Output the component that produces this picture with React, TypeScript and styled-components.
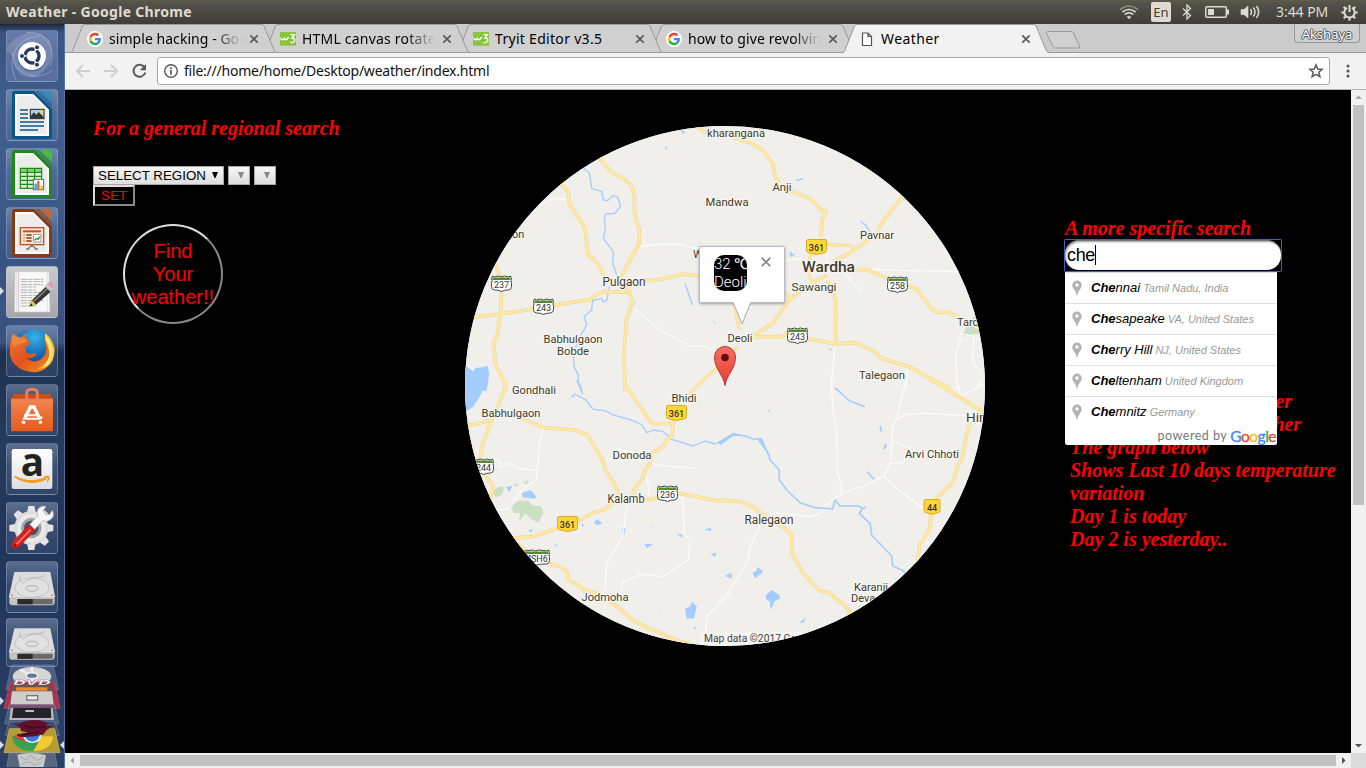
import React from "react";
import styled, { createGlobalStyle } from "styled-components";

const Global = createGlobalStyle`
  * { box-sizing: border-box; }
  html, body { margin: 0; padding: 0; overflow: hidden; }
`;

const UI = `"Noto Sans", "Open Sans", sans-serif`;

const Screen = styled.div`
  width: 1366px; height: 768px; display: flex; flex-direction: column;
  background: #000; overflow: hidden; font-family: ${UI};
`;

/* ---------- system panel ---------- */
const Panel = styled.header`
  height: 24px; flex: none; display: flex; align-items: center; justify-content: space-between;
  padding: 0 8px 0 6px; color: #dfdbd2;
  background: linear-gradient(#5d5a4e 0, #55524a 3px, #3e3d39 100%);
`;
const PanelTitle = styled.div`font: bold 14px/24px ${UI}; letter-spacing: 0.3px; white-space: nowrap;`;
const Indicators = styled.div`display: flex; align-items: center; height: 24px;`;
const Gap = styled.span<{ $w: number }>`width: ${p => p.$w}px; flex: none;`;
const Spring = styled.span`flex: 1;`;
const Lang = styled.span`
  width: 20px; height: 20px; border-radius: 2px; background: #dfdbd2; color: #3d3c38;
  font: 13px/21px ${UI}; text-align: center;
`;
const Clock = styled.span`font: 14px/24px ${UI}; width: 52px; white-space: nowrap; letter-spacing: -0.05px;`;

const Body = styled.div`flex: 1; display: flex; min-height: 0;`;

/* ---------- launcher ---------- */
const Launcher = styled.nav`
  width: 65px; flex: none; height: 744px; display: flex; flex-direction: column; align-items: center;
  gap: 7px; padding: 6px 1px 0 0; border-right: 1px solid #55759f; overflow: hidden; position: relative;
  background: linear-gradient(#1d2840 0, #3a527f 8px, #41608f 90px, #3a5584 230px, #3a5280 318px, #1d3150 328px, #263a5c 420px, #22355a 560px, #2c4166 744px);
`;
const Tile = styled.div<{ $lit?: boolean; $h?: number }>`
  width: 52px; height: ${p => p.$h ?? 52}px; flex: none; border-radius: 4px;
  margin-top: ${p => (p.$h ? -2 : 0)}px;
  border: 1px solid rgba(190, 205, 230, 0.3);
  background: ${p => p.$lit
    ? "linear-gradient(#c9cacc, #a4a4aa)"
    : "linear-gradient(rgba(200,215,240,.34), rgba(150,170,205,.2) 45%, rgba(110,135,180,.18))"};
  svg { display: block; margin: -1px; width: 52px; height: ${p => p.$h ?? 52}px; }
`;
const Stack = styled.svg`width: 64px; height: 104px; flex: none; display: block; margin-top: -11px;`;
const RunMark = styled.i<{ $top: number; $right?: boolean }>`
  position: absolute; top: ${p => p.$top}px; ${p => (p.$right ? "right: 0" : "left: 0")};
  border: 4px solid transparent;
  ${p => (p.$right ? "border-left: 0; border-right-color: #d8dce4" : "border-right: 0; border-left-color: #d8dce4")};
`;

const Icon = ({ children }: { children: React.ReactNode }) => (
  <svg viewBox="0 0 156 156" preserveAspectRatio="none">{children}</svg>
);

const UbuntuIcon = () => (
  <Icon>
    <rect x="3" y="3" width="150" height="150" rx="10" fill="#6478ac" opacity=".6" />
    <path d="M0 60C20 10 90-10 130 30C150 70 130 120 90 140C50 150 20 120 22 80" fill="#fff" opacity=".16" />
    <path d="M30 150C0 90 30 20 100 20M60 8C120 0 155 60 130 110M20 70C20 130 90 160 140 120" fill="none" stroke="#fff" strokeWidth="3" opacity=".25" />
    <circle cx="78" cy="81" r="43" fill="#304473" opacity=".5" />
    <circle cx="78" cy="78" r="42" fill="#fff" />
    <circle cx="78" cy="78" r="21" fill="none" stroke="#2c3a5c" strokeWidth="10" strokeDasharray="39 5" strokeDashoffset="-2.5" transform="rotate(180 78 78)" />
    {[180, 300, 60].map(a => (
      <circle key={a} cx={78 + 30 * Math.cos((a * Math.PI) / 180)} cy={78 + 30 * Math.sin((a * Math.PI) / 180)} r="7.5" fill="#2c3a5c" stroke="#fff" strokeWidth="3" />
    ))}
  </Icon>
);

const OfficeDoc = ({ c, l, children }: { c: string; l: string; children: React.ReactNode }) => (
  <Icon>
    <path d="M26 6H84L138 60V142Q138 150 130 150H26Q18 150 18 142V14Q18 6 26 6Z" fill={c} />
    <path d="M84 6H130Q138 6 138 14V60Z" fill={c} opacity=".45" />
    <path d="M101 6H130Q138 6 138 14V43Z" fill={l} opacity=".85" />
    <path d="M27 15H82L129 62V141H27Z" fill="#fbfbfb" />
    <path d="M33 21H80L123 64V135H33Z" fill="#ececec" />
    {children}
  </Icon>
);

const WriterIcon = () => (
  <OfficeDoc c="#0b5688" l="#3a8fbd">
    <path d="M42 63H66M42 75H66M42 87H66M42 99H114M42 111H114M42 123H96" stroke="#0b5688" strokeWidth="5" />
    <rect x="73" y="61" width="41" height="28" fill="#9fd2ee" stroke="#222" strokeWidth="3" />
    <circle cx="106" cy="68" r="6" fill="#f5d74a" />
    <path d="M75 87V80L84 70L91 78L98 69L112 83V87Z" fill="#333" />
  </OfficeDoc>
);
const CalcIcon = () => (
  <OfficeDoc c="#1d8a10" l="#4cc43a">
    <rect x="43" y="61" width="64" height="60" fill="#d9f5d0" />
    <rect x="43" y="61" width="64" height="12" fill="#8ad57a" />
    <path d="M43 61H107V121H43ZM43 73H107M43 85H107M43 97H107M43 109H107M64 61V121M86 61V121" fill="none" stroke="#1d8a10" strokeWidth="3.5" />
    <rect x="82" y="94" width="31" height="31" fill="#fff" stroke="#666" strokeWidth="3" />
    <path d="M89 124V107" stroke="#3b9fe0" strokeWidth="7" /><path d="M97 124V99" stroke="#e8681a" strokeWidth="7" /><path d="M107 124V113" stroke="#f0c000" strokeWidth="7" />
  </OfficeDoc>
);
const ImpressIcon = () => (
  <OfficeDoc c="#8a3a10" l="#cf6a35">
    <rect x="43" y="62" width="70" height="51" fill="#fbe6da" stroke="#c4501c" strokeWidth="4" />
    <path d="M51 73H105" stroke="#c4501c" strokeWidth="6" />
    <path d="M51 84H58M51 93H58M51 102H58" stroke="#e39a72" strokeWidth="5" />
    <path d="M61 84H77M61 93H77M61 102H77" stroke="#8a3a10" strokeWidth="5" />
    <rect x="83" y="83" width="22" height="22" fill="#fff" stroke="#777" strokeWidth="2" />
    <path d="M86 100L92 94L96 97L103 88" stroke="#1f9a2f" strokeWidth="4" fill="none" />
    <path d="M66 125L78 115L90 125M60 126H70M86 126H96" stroke="#777" strokeWidth="4" fill="none" />
  </OfficeDoc>
);
const EditorIcon = () => (
  <Icon>
    <path d="M27 17H129L132 138H25Z" fill="#f8f8f6" stroke="#c9c9c9" strokeWidth="2" />
    <path d="M37 18V137" stroke="#e59a9a" strokeWidth="2" /><path d="M124 18V137M31 18V137" stroke="#b9cdea" strokeWidth="1.5" />
    <g stroke="#999" strokeWidth="2.2" strokeDasharray="20 2 13 3">
      {[40, 47, 56, 63, 72, 79, 88, 95, 104, 111, 120].map(y => <path key={y} d={`M44 ${y}H${y % 3 ? 112 : 90}`} />)}
    </g>
    <path d="M78 103L124 58L139 73L90 116L70 121Z" fill="#363636" />
    <path d="M84 106L128 64" stroke="#888" strokeWidth="4" />
    <path d="M78 103L90 116L70 121Z" fill="#e6cf52" /><path d="M76 112L70 121L80 119Z" fill="#222" />
    <path d="M116 61L126 51L144 67L134 78Z" fill="#c8c8c8" />
    <path d="M124 53L130 48Q139 48 143 59L139 67Z" fill="#e993b8" />
  </Icon>
);
const FirefoxIcon = () => (
  <Icon>
    <defs>
      <radialGradient id="ffb" cx=".55" cy=".2" r=".8"><stop offset="0" stopColor="#35b4ea" /><stop offset=".6" stopColor="#1464ab" /><stop offset="1" stopColor="#0c3470" /></radialGradient>
      <linearGradient id="ffo" x2="1" y2="1"><stop offset="0" stopColor="#ec7930" /><stop offset=".5" stopColor="#e2521f" /><stop offset="1" stopColor="#f59a20" /></linearGradient>
    </defs>
    <circle cx="80" cy="73" r="61" fill="url(#ffb)" />
    <path d="M20 26C28 38 35 38 46 37L62 25C59 35 61 43 66 47L75 53C74 59 58 62 57 67C60 72 61 77 60 81C68 92 84 82 91 86C88 96 76 102 61 99C74 110 91 113 104 103C119 92 123 75 118 53C112 44 115 37 120 28C127 40 135 42 139 57C145 70 151 61 140 106C120 139 94 145 72 140C38 136 8 111 12 75C10 53 15 43 20 26Z" fill="url(#ffo)" />
    <path d="M118 25C140 43 155 76 138 108C128 127 113 130 94 132C124 118 137 96 125 65C118 45 115 40 118 25Z" fill="#f9cf3c" />
    <path d="M121 39C140 66 138 101 118 121" fill="none" stroke="#fff3a6" strokeWidth="5" />
    <path d="M20 26C13 48 20 56 23 66L41 56L57 54L64 48L55 40L45 38Z" fill="#f3a35b" opacity=".45" />
  </Icon>
);
const SoftwareIcon = () => (
  <Icon>
    <defs><linearGradient id="bag" x2="0" y2="1"><stop offset="0" stopColor="#f0854e" /><stop offset="1" stopColor="#e8591f" /></linearGradient></defs>
    <path d="M22 30H134L141 48H15Z" fill="#c94e1c" />
    <path d="M15 44H141V142H15Z" fill="url(#bag)" />
    <path d="M62 52V26Q62 16 78 16Q94 16 94 26V52" fill="none" stroke="#e88054" strokeWidth="9" />
    <path d="M57 102L73 69H84L100 102M54 111L51 119M102 111L105 119" fill="none" stroke="#fff" strokeWidth="10" />
    <path d="M50 104H101Q107 104 106 97M54 94H96" stroke="#fff" strokeWidth="6" fill="none" />
  </Icon>
);
const AmazonIcon = () => (
  <Icon>
    <defs><linearGradient id="az" x2="0" y2="1"><stop offset="0" stopColor="#fff" /><stop offset="1" stopColor="#dedee2" /></linearGradient></defs>
    <rect x="17" y="18" width="122" height="120" rx="7" fill="url(#az)" />
    <text x="79" y="100" textAnchor="middle" fontFamily="Open Sans, sans-serif" fontWeight="bold" fontSize="116" fill="#222">a</text>
    <path d="M25 103Q72 134 122 109L119 103Q72 122 27 98Z" fill="#f79a1c" />
    <path d="M109 103Q124 94 131 101Q132 110 122 120L125 105Z" fill="#f79a1c" />
  </Icon>
);
const SettingsIcon = () => (
  <Icon>
    <g transform="translate(76 78)">
      {[0, 45, 90, 135, 180, 225, 270, 315].map(a => <path key={a} d="M-13-46L-9-66H9L13-46Z" fill="#e5e5e5" transform={`rotate(${a})`} />)}
      <circle r="51" fill="#dcdcdc" /><circle r="43" fill="#eaeaea" /><circle r="31" fill="#a5a5a5" /><circle r="22" fill="#45536d" />
    </g>
    <path d="M22 118L70 69L87 84L38 136Q28 144 18 134Q13 128 22 118Z" fill="#d2231b" stroke="#a81713" strokeWidth="2" />
    <path d="M31 127L74 83" stroke="#f57268" strokeWidth="5" />
    <circle cx="27" cy="130" r="4" fill="#801010" />
    <path d="M71 67L96 42Q88 21 105 14Q113 10 120 14L112 26L119 38L130 38L139 25Q148 42 135 52Q124 62 110 56L86 82Z" fill="#f6f6f6" stroke="#aaa" strokeWidth="2" />
  </Icon>
);
const DriveIcon = () => (
  <Icon>
    <path d="M26 34H132L146 108H10Z" fill="#dcdcdc" stroke="#eee" strokeWidth="2" />
    <path d="M10 108H146V124Q146 133 136 133H20Q10 133 10 124Z" fill="#c5c5c3" />
    <path d="M38 114H140V130H40Z" fill="#6a6a68" /><path d="M34 114H80V130H34Z" fill="#2c2c2c" />
    <ellipse cx="78" cy="80" rx="51" ry="29" fill="#e1e1e1" stroke="#b5b5b5" strokeWidth="2" />
    <path d="M45 43Q35 60 52 66Q70 48 110 48L113 39" fill="none" stroke="#aaa" strokeWidth="2" />
    <ellipse cx="78" cy="82" rx="18" ry="9" fill="#ddd" stroke="#999" strokeWidth="2" />
    <circle cx="18" cy="103" r="2.5" fill="#777" /><circle cx="138" cy="103" r="2.5" fill="#777" />
  </Icon>
);

/* folded tiles at the launcher's foot: disc, files, terminal, a red splash, chrome, trash */
const FoldedIcons = () => (
  <Stack viewBox="0 489 192 312">
    <path d="M34 495H160L176 570H18Z" fill="#7d92ba" opacity=".4" stroke="#c5d2e8" strokeWidth="2" />
    <path d="M38 530A58 29 0 0 1 154 530L148 545H44Z" fill="#d5d5d3" />
    <path d="M62 510L130 548M96 500V548" stroke="#fff" strokeWidth="7" opacity=".6" />
    <ellipse cx="96" cy="527" rx="17" ry="9" fill="#607994" stroke="#eee" strokeWidth="5" />
    <path d="M30 548H164L180 625H12Z" fill="#a7344c" stroke="#c55068" strokeWidth="2" />
    <path d="M40 557H150L157 574H35Z" fill="#5c5b57" />
    <path d="M48 562H142V572H48Z" fill="#ea8b2d" />
    <path d="M36 574H156L161 613H31Z" fill="#cecdc9" />
    <rect x="80" y="587" width="33" height="13" fill="#eee" stroke="#777" strokeWidth="4" />
    <text x="40" y="556" fontFamily="DejaVu Sans" fontWeight="bold" fontStyle="italic" fontSize="22" textLength="112" lengthAdjust="spacingAndGlyphs" fill="#fff" stroke="#555" strokeWidth=".8">DVD</text>
    <path d="M28 614H164L176 672H14Z" fill="#5a6a8a" opacity=".65" stroke="#93a3bf" strokeWidth="2" />
    <path d="M32 624H158L162 660H28Z" fill="#b7b8bb" /><path d="M40 624H152L154 654H36Z" fill="#242329" />
    <path d="M76 633H102" stroke="#ddd" strokeWidth="5" />
    <path d="M28 664H164L178 706H16Z" fill="#414e74" stroke="#7787a8" strokeWidth="2" />
    <path d="M28 686H164L180 758H12Z" fill="#b59c34" stroke="#d2bb58" strokeWidth="2" />
    <path d="M36 709Q40 752 96 754Q150 750 158 709Z" fill="#36a350" />
    <path d="M96 709H160Q154 752 100 754L116 725Z" fill="#f7ca34" />
    <path d="M38 709L62 702L80 728Z" fill="#db4437" />
    <path d="M68 705Q70 727 97 729Q123 727 124 705Z" fill="#eee" /><path d="M74 705Q78 724 97 725Q116 723 119 705Z" fill="#3f7be5" />
    <path d="M38 668Q60 675 68 665Q105 655 128 664L150 668L133 676L159 679Q138 688 131 703Q100 713 60 710Q37 700 70 701L84 696Q56 696 62 684Q48 676 38 668Z" fill="#64102c" />
    <path d="M70 675Q98 690 138 678M66 703Q102 700 118 696" fill="none" stroke="#331227" strokeWidth="5" />
    <path d="M28 758H164L172 804H20Z" fill="#6e7788" stroke="#a6afbf" strokeWidth="2" opacity=".7" />
    <path d="M52 764Q94 753 138 766L130 804H60Z" fill="#c9cbc9" />
    <path d="M60 770L78 780L92 766L112 782L130 770M66 792L88 784L104 796L124 786" stroke="#a2a8aa" strokeWidth="3" fill="none" />
  </Stack>
);

/* ---------- browser window ---------- */
const Browser = styled.main`flex: 1; display: flex; flex-direction: column; min-width: 0;`;
const TabStrip = styled.div`
  height: 29px; flex: none; display: flex; position: relative; padding-left: 6px; background: #cbcbcb;
  border-bottom: 1px solid #999;
`;
const TabBox = styled.div<{ $z: number }>`
  position: relative; z-index: ${p => p.$z}; width: 206px; height: 29px; flex: none; margin-right: -13px;
  display: flex; align-items: center; padding: 0 18px 0 16px;
  > svg { flex: none; }
  > svg:first-child { position: absolute; left: 0; top: 0; }
`;
const TabText = styled.span<{ $fade?: boolean; $ls: number }>`
  position: relative; flex: 1; margin: 0 8px 0 6px; overflow: hidden; white-space: nowrap; color: #000;
  font: 14px/29px ${UI}; letter-spacing: ${p => p.$ls}px;
  ${p => p.$fade && "-webkit-mask-image: linear-gradient(90deg, #000 104px, transparent 133px);"}
`;
const Raised = styled.svg`position: relative;`;
const Profile = styled.div`
  margin-left: auto; margin-right: 6px; width: 66px; height: 19px; border: 1px solid #999; border-top: 0;
  border-radius: 0 0 4px 4px; background: #cfcfcf; color: #fff; text-align: center; font: 13px/20px ${UI};
  text-shadow: 1px 0 #555, -1px 0 #555, 0 1px #555, 0 -1px #555;
`;
const NewTab = styled.svg`margin: 6px 0 0 9px; flex: none;`;

const GoogleG = () => (
  <Raised width="16" height="16" viewBox="0 0 48 48">
    <circle cx="24" cy="24" r="24" fill="#fff" />
    <g transform="translate(5.5 5.5) scale(.77)">
      <path fill="#EA4335" d="M24 9.5c3.5 0 6.700 1.200 9.200 3.600l6.900-6.900C35.900 2.400 30.500 0 24 0 14.600 0 6.500 5.400 2.600 13.200l8 6.200C12.400 13.700 17.700 9.500 24 9.500z" />
      <path fill="#4285F4" d="M47 24.600c0-1.600-.2-3.100-.4-4.600H24v9h12.900c-.6 3-2.200 5.500-4.700 7.200l7.700 6C44.400 38 47 31.800 47 24.600z" />
      <path fill="#FBBC05" d="M10.500 28.600a14.500 14.500 0 0 1 0-9.200l-8-6.200a24 24 0 0 0 0 21.600z" />
      <path fill="#34A853" d="M24 48c6.500 0 11.900-2.100 15.900-5.800l-7.700-6c-2.200 1.500-4.900 2.300-8.200 2.300-6.300 0-11.600-4.200-13.500-9.900l-8 6.200C6.500 42.600 14.600 48 24 48z" />
    </g>
  </Raised>
);
const W3 = () => (
  <Raised width="16" height="16" viewBox="0 0 48 48">
    <path d="M0 3H48V44H0Z" fill="#8bc53f" />
    <path d="M2 20Q4 28 9 26Q13 24 13 20Q14 27 18 26Q23 25 24 20H27M31 11H43L36 21Q45 20 44 29Q41 37 31 34" fill="none" stroke="#fff" strokeWidth="4" />
  </Raised>
);
const PageIcon = () => (
  <Raised width="16" height="16" viewBox="0 0 16 16">
    <path d="M3.500 2H9L12.500 5.500V14.500H3.500ZM9 2V5.500H12.500" fill="#fff" stroke="#555" strokeWidth="1.200" />
  </Raised>
);
const CloseX = () => (
  <Raised width="10" height="10" viewBox="0 0 10 10"><path d="M1.300 1.300L8.700 8.700M8.700 1.300L1.300 8.700" stroke="#5a5a5a" strokeWidth="1.700" /></Raised>
);

const Tab = ({ title, icon, z, active, fade, ls = 0 }: { title: string; icon: React.ReactNode; z: number; active?: boolean; fade?: boolean; ls?: number }) => (
  <TabBox $z={z}>
    <svg width="206" height="29" viewBox="0 0 206 29">
      <path d="M0 29C1.500 28 1.500 27 2 26L11.500 2Q12.300.5 14 .5H190Q192 .5 193 2L203 26Q204 28.500 206 29Z" fill={active ? "#f2f2f2" : "#d0d0d0"} />
      <path d="M0 28.500C1.500 28 1.500 27 2 26L11.500 2Q12.300.5 14 .5H190Q192 .5 193 2L203 26Q204 28.500 206 28.500" fill="none" stroke="#999" />
      {!active && <path d="M0 28.500H206" stroke="#999" />}
    </svg>
    {icon}
    <TabText $fade={fade} $ls={ls}>{title}</TabText>
    <CloseX />
  </TabBox>
);

const Toolbar = styled.div`
  height: 37px; flex: none; display: flex; align-items: center; background: #f2f2f2; padding: 0 12px 0 10px;
  border-bottom: 1px solid #b6b6b6;
`;
const Omnibox = styled.div`
  height: 28px; width: 1173px; margin: 0 0 0 9px; border: 1px solid #a9a9a9; border-radius: 3px; background: #fff;
  display: flex; align-items: center; padding: 0 5px 0 5px; color: #111; font: 14px/26px ${UI};
`;
const Url = styled.span`flex: 1; margin-left: 5px; letter-spacing: -0.22px; white-space: nowrap;`;
const Menu = styled.svg`margin-left: 16px; flex: none;`;

const Viewport = styled.div`flex: 1; display: grid; grid-template: 663px 15px / 1286px 15px;`;
const Page = styled.section`
  background: #000; overflow: hidden; display: flex; align-items: flex-start; color: #f00;
  font: italic bold 20px/23px "Liberation Serif", serif;
`;
const ScrollTrack = styled.div<{ $across?: boolean }>`
  background: #f1f1f1; display: flex; align-items: center; flex-direction: ${p => (p.$across ? "row" : "column")};
`;
const VThumb = styled.i`width: 11px; height: 400px; background: #c1c1c1;`;
const HThumb = styled.i`width: 1256px; height: 11px; background: #c1c1c1;`;
const Corner = styled.div`background: #dcdcdc;`;
const ArrowSvg = styled.svg<{ $turn: number }>`flex: none; transform: rotate(${p => p.$turn}deg);`;
const Arrow = ({ turn, on }: { turn: number; on?: boolean }) => (
  <ArrowSvg $turn={turn} width="15" height="15" viewBox="0 0 15 15">
    <path d="M4 9L7.500 5.500L11 9Z" fill={on ? "#505050" : "#a3a3a3"} />
  </ArrowSvg>
);

/* ---------- page: left column ---------- */
const LeftColumn = styled.div`width: 372px; margin-left: 28px; padding-top: 27px;`;
const MapSlot = styled.div`width: 600px; padding-top: 36px;`;
const RightColumn = styled.div`width: 286px; padding-top: 127px; position: relative;`;
const Line = styled.div`height: 23px; white-space: nowrap;`;
const Selects = styled.div`display: flex; gap: 4px; margin-top: 26px;`;
const Select = styled.div<{ $off?: boolean }>`
  height: 19px; width: ${p => (p.$off ? 22 : 131)}px; border: 1px solid #a6a6a6; padding: 0 5px 0 4px;
  background: linear-gradient(#f6f6f6, #dedede); color: ${p => (p.$off ? "#888" : "#000")};
  display: flex; align-items: center; justify-content: ${p => (p.$off ? "flex-end" : "space-between")};
  font: normal 13.333px/17px "Liberation Sans", sans-serif; white-space: nowrap;
  svg { margin-bottom: 2px; }
`;
const Caret = () => <svg width="6" height="6" viewBox="0 0 6 6"><path d="M0 0H6L3.500 6H2.500Z" fill="currentColor" /></svg>;
const SetButton = styled.button`
  display: block; width: 42px; height: 21px; padding: 0; border: 2px solid; border-color: #ddd #888 #888 #ddd;
  background: #000; color: #f00; font: 13.333px/17px "Liberation Sans", sans-serif;
`;
const RoundButton = styled.button`
  display: block; margin: 18px 0 0 30px; width: 100px; height: 100px; padding: 0; border-radius: 50%;
  border: 2px solid; border-color: #ddd #888 #888 #ddd; background: #000; color: #f00; white-space: nowrap;
  font: 20px/23px "Liberation Sans", sans-serif;
`;

/* ---------- page: search ---------- */
const SearchField = styled.div`
  width: 216px; height: 31px; background: #000; border-radius: 1px; box-shadow: 0 0 0 1px #3a66b4;
`;
const SearchPill = styled.div`
  width: 216px; height: 30px; border-radius: 14px; background: #fff; color: #000; padding: 0 0 2px 2px;
  display: flex; align-items: center; font: normal 18px/28px "Liberation Sans", sans-serif; letter-spacing: -0.35px;
  border-top: 1px solid #777; box-shadow: inset 1px 1px 2px #999;
`;
const TextCaret = styled.i`width: 1px; height: 20px; background: #000;`;
const Suggestions = styled.div`
  position: absolute; z-index: 2; left: 0; top: 182px; width: 212px; height: 173px; background: #fff;
  border-radius: 0 0 2px 2px; font-family: "Liberation Sans", sans-serif; font-weight: normal;
`;
const Suggestion = styled.div`
  height: 31px; display: flex; align-items: center; border-top: 1px solid #e0e0e0; font-size: 13px; line-height: 30px;
  color: #000; white-space: nowrap;
  svg { margin: 0 9px 0 7px; flex: none; }
  small { font-size: 11px; color: #999; margin-left: 3px; }
`;
const Powered = styled.div`
  height: 18px; display: flex; justify-content: flex-end; align-items: center; padding-right: 1px; color: #767676;
  font: normal 12.500px/16px Lato, sans-serif; letter-spacing: .5px; white-space: nowrap;
`;
const GoogleWord = styled.span`font: normal 15.500px/16px Lato, sans-serif; margin-left: 3px; letter-spacing: -0.5px;`;
const Ink = styled.span<{ $c: string }>`color: ${p => p.$c}; -webkit-text-stroke: .3px ${p => p.$c};`;
const Notes = styled.div`padding: 119px 0 0 5px;`;
const TailLine = styled(Line)<{ $w: number }>`width: ${p => p.$w}px; text-align: right;`;

const places: [string, string, string][] = [
  ["Che", "nnai", "Tamil Nadu, India"],
  ["Che", "sapeake", "VA, United States"],
  ["Che", "rry Hill", "NJ, United States"],
  ["Che", "ltenham", "United Kingdom"],
  ["Che", "mnitz", "Germany"],
];

/* ---------- map ---------- */
const MapDisc = styled.div`
  width: 520px; height: 520px; border-radius: 50%; overflow: hidden; position: relative; background: #f0efeb;
  font-style: normal; font-weight: normal;
  > svg { display: block; }
`;
const Bubble = styled.div`
  position: absolute; left: 234px; top: 120px; width: 86px; height: 57px; background: #fff; border: 1px solid #bbb;
  border-radius: 2px; box-shadow: 0 1px 3px rgba(0,0,0,.35); padding: 8px 10px 0 14px;
  display: flex; justify-content: space-between;
`;
const BubbleTail = styled.svg`position: absolute; left: 31px; top: 54px;`;
const Reading = styled.div`
  width: 33px; height: 36px; border-radius: 10px; background: #000; color: #fff; overflow: hidden; white-space: nowrap;
  font: normal 300 15px/18px Roboto, sans-serif;
`;
const BubbleClose = styled.svg`margin: 2px 3px 0 0;`;

/* each sheet is drawn at 3 units per pixel from its own origin */
type Sheet = { x: number; y: number; roads: string; lanes: string; rivers: string; lakes: string; woods?: string };
const sheets: Sheet[] = [
  {
    x: 460, y: 120,
    roads: "M705 12L728 34L745 38M410 100L425 122L452 155L500 182L518 202L524 235L523 275L538 330L537 372L480 475M296 183L325 215L328 253L362 303L375 325L384 405L405 420L426 452L432 475M550 480L575 482L620 474L670 462L725 468M30 592L120 582L200 570L300 553L392 538L410 522L430 515L505 517M100 415L115 455L123 480L124 560L118 600L112 645L102 665L105 730L135 790L138 812M502 500L518 548L500 595L492 700L495 812",
    lanes: "M235 256L285 235L320 238M540 380L600 373L660 373L720 390M515 560L600 630L690 678L740 680L745 690L765 682",
    rivers: "M365 140L388 160L395 205L425 214L430 240L442 242L458 228L472 230L482 258L465 280L437 282L433 300L436 330L430 355L460 395L458 430L470 465M448 500L440 542L428 545L425 535L398 541L395 570L372 590L380 615L360 650L340 700L342 740L355 765L355 785L366 812M665 30L672 40M618 88L619 80M675 490L697 555",
    lakes: "M15 735L40 755L45 745L83 738L88 760L80 812H15ZM755 598L768 610L766 612ZM460 92L478 88L470 86ZM512 540L528 550L518 553ZM665 28L678 40L668 38Z",
  },
  {
    x: 720, y: 120,
    roads: "M30 45L45 55L90 68L128 90L158 130L165 168L178 190M210 212L275 238L303 270L318 274L306 300L303 350M100 648L160 608L212 535L275 490L320 465M340 425L395 395L445 360M473 335L485 310L540 238L560 226M400 448L442 450L510 478L590 508L638 570L655 577L685 577L720 595L785 628M322 480L347 540L347 672M100 650L188 650L200 638L260 655L345 672L403 668L465 695L480 713L570 742L690 806",
    lanes: "M195 422L245 415M375 460L398 490L425 515M458 448L600 453L745 455M345 672L332 812M562 740L558 812M320 380L322 465M720 640L762 650L758 725L785 760M725 650L708 700L712 812M765 812L785 780",
    rivers: "M228 182L248 176M422 304L436 315L450 335M345 804L355 810",
    lakes: "M208 402L214 394L216 402L228 400L214 412ZM326 685L338 690L330 692ZM230 180L246 175L248 179Z",
    woods: "M752 598L780 575L795 650L770 640L730 650L736 625Z",
  },
  {
    x: 460, y: 380,
    roads: "M135 0L138 15L110 88L95 120L65 200L60 245L80 290L100 320L90 360M495 0L495 15L575 130L640 131L636 168L618 182L612 198L575 220L570 250L555 270L548 295L525 322L515 352M640 131L650 90M15 135L40 134L100 118M125 90L185 115L250 143L345 150L382 165L400 195L428 240L435 270L460 305L480 350M150 475L215 470L260 455L360 420L395 400L430 390L460 370M555 360L600 352M650 340L700 348L770 362L812 363M160 478L195 510L265 548L300 560L320 575L325 598L375 630L410 640L455 668L478 685L515 718L560 742L670 788L690 790",
    lanes: "M250 145L238 190L235 245L228 300L185 330L150 385L100 390M88 240L118 242L122 262L148 250L175 265L225 272M425 240L475 235M470 205L520 220M575 250L600 257L708 264M555 275L565 320L565 350M502 370L488 470L440 550L435 630M668 350L672 460L690 485L685 540L610 590L545 583L490 605L482 640M812 640L742 708L735 770",
    rivers: "M350 0L368 42M335 52L345 42L378 60L400 88L435 92L460 105L520 122L545 135L560 158L580 150L610 155L635 178L700 198L735 183L765 192L812 168",
    lakes: "M15 0H83L62 45L40 80L15 96ZM137 322L158 317L148 336ZM185 340L212 330L230 350L225 356L188 352ZM402 427L412 418L428 430L410 436ZM487 445L497 443L492 466L487 458ZM552 493L580 492L562 504ZM648 460L668 465L668 473ZM733 450L752 443L755 453ZM752 522L770 518L765 531ZM675 685L690 680L697 665L710 680L702 715L680 716ZM570 435L573 438L570 441ZM205 450L220 448L212 458ZM797 588L810 580V592ZM702 741L710 745L704 749ZM285 492L294 495L287 499ZM365 430L373 435L366 440ZM598 700L601 698L601 704Z",
    woods: "M96 335L120 318L132 322L128 342L108 353ZM150 378L175 362L205 362L215 375L245 380L250 400L235 428L215 418L195 400L178 425L180 400L160 398ZM160 312L178 310L168 322ZM190 305L206 300L200 315Z",
  },
  {
    x: 720, y: 380,
    roads: "M625-5L720 52L790 97M-2 360L60 365L100 382L150 420L180 435L215 462L216 520L250 580L298 632L328 638L378 680L388 697L410 697M752 125L742 155L725 240L712 260L698 308L645 360M633 400L628 450L598 495L592 555",
    lanes: "M335 0L338 90L350 150L352 280L365 320L360 345M558 0L530 115L518 140L512 245L492 288M530 118L560 103L620 100L720 106L770 106M515 182L570 205L550 248L512 250M492 288L430 320L390 330L345 355L305 385L302 400L270 410L165 398M492 288L528 325L610 385M120 435L90 500L85 540L30 630L-2 665M712 0L722 50L790 12M600 480L628 490",
    rivers: "M-2 190L40 163L75 168L100 177L122 177L148 228L150 240L178 270L178 300L200 330L240 368L280 382L338 387L345 360L360 378L415 378L428 385L418 400L450 430L455 465L515 528L518 558L550 572L560 584M346 24L388 62L435 80M442 276L462 298M480 138L485 155M492 208L498 192M426 388L437 380",
    lakes: "M-5 185L40 158L80 168L40 168L0 196ZM112 177L125 173L142 212L135 210ZM15 588L35 579L36 596ZM98 578L110 572L112 560L130 575L105 595ZM138 645L155 630L178 645L182 655L165 663L152 690L150 665L138 658ZM238 730L258 710L250 728ZM143 90L150 90L147 97ZM492 205L498 192L500 200Z",
  },
];

/* narrower roads, in map pixels */
const minorRoads = "M826.500 244.500L848.500 245.500L857 248.500M811.500 253L806.500 267L812 283M783 290.500L791 297.500M733 300L739.500 330M737 346L732 356M724 362L703 380L690 393L684 400";

const towns: [string, number, number, number, number][] = [
  ["kharangana", 736, 137, 58, 11], ["Anji", 782, 191, 19, 11], ["Mandwa", 727, 206, 43, 11], ["Pavnar", 877, 239, 34, 11],
  ["Sawangi", 814, 291, 45, 11], ["Pulgaon", 624, 286, 43, 12], ["Deoli", 740, 342, 25, 11],
  ["Babhulgaon", 573, 343, 59, 11], ["Bobde", 573, 355, 32, 11], ["Gondhali", 534, 394, 44, 11], ["Babhulgaon", 511, 417, 59, 11],
  ["Bhidi", 684, 402, 25, 11], ["Donoda", 632, 459, 39, 11], ["Kalamb", 626, 503, 37, 12], ["Talegaon", 882, 379, 46, 11],
  ["Arvi Chhoti", 932, 458, 54, 11], ["Ralegaon", 769, 524, 49, 12], ["Jodmoha", 605, 601, 47, 11], ["Karanji", 871, 591, 34, 11],
];
const loose: [string, number, number][] = [["on", 512, 238], ["W", 693, 258], ["Taro", 957, 326], ["Deva", 851, 602]];

const Shield = ({ x, y, n, yellow }: { x: number; y: number; n: string; yellow?: boolean }) => {
  const w = n.length === 2 ? 8 : n.length === 4 ? 14 : 10;
  return (
    <g transform={`translate(${x} ${y})`}>
      {yellow ? (
        <path d={`M${-w} -5.500Q${-w} -7 ${-w + 1.500} -7H${w - 1.500}Q${w} -7 ${w} -5.500V4Q${w} 6 ${w - 3} 6.500L0 8L${-w + 3} 6.500Q${-w} 6 ${-w} 4Z`} fill="#fdd835" stroke="#d9a520" strokeWidth=".9" />
      ) : (
        <>
          <path d={`M${-w + 1} -7.500L${-w + 3} -6.500L-3 -7.500L0 -6.500L3 -7.500L${w - 3} -6.500L${w - 1} -7.500L${w} -5Q${w - 1} -3 ${w} 0V3Q${w} 6 ${w - 3} 6.500Q2 6.500 0 8Q-2 6.500 ${-w + 3} 6.500Q${-w} 6 ${-w} 3V0Q${-w + 1} -3 ${-w} -5Z`} fill="#fff" stroke="#444" strokeWidth="1" />
          <path d={`M${-w + 1} -6H${w - 1}V-3.500H${-w + 1}Z`} fill="#558b2f" />
        </>
      )}
      <text y={yellow ? 4 : 4.5} textAnchor="middle" fontSize="9" fontWeight={yellow ? 500 : 400} fill="#333">{n}</text>
    </g>
  );
};

const MapDrawing = () => (
  <svg width="520" height="520" viewBox="465 126 520 520" fontFamily="Roboto, sans-serif">
    <rect x="465" y="126" width="520" height="520" fill="#f0efeb" />
    {(["woods", "lakes", "lanes", "rivers", "case", "roads"] as const).map(layer => (
      <g key={layer} fill="none" strokeLinejoin="round">
        {layer === "case" && <path d={minorRoads} stroke="#eed999" strokeWidth="3" />}
        {layer === "roads" && <path d={minorRoads} stroke="#ffe8a4" strokeWidth="2" />}
        {sheets.map(s => (
          <g key={`${s.x}-${s.y}`} transform={`translate(${s.x} ${s.y}) scale(.33333)`}>
            {layer === "woods" && <path d={s.woods} fill="#cbdfc3" />}
            {layer === "lakes" && <path d={s.lakes} fill="#a3ccff" />}
            {layer === "lanes" && <path d={s.lanes} stroke="#fcfcfa" strokeWidth="3.500" />}
            {layer === "rivers" && <path d={s.rivers} stroke="#a3ccff" strokeWidth={s.x === 720 && s.y === 380 ? 5 : 4} />}
            {layer === "case" && <path d={s.roads} stroke="#eed999" strokeWidth="11" />}
            {layer === "roads" && <path d={s.roads} stroke="#ffe8a4" strokeWidth="7.500" />}
          </g>
        ))}
      </g>
    ))}
    <Shield x={816.500} y={246.500} n="361" yellow /><Shield x={676.500} y={412.500} n="361" yellow />
    <Shield x={567.500} y={523.500} n="361" yellow /><Shield x={932} y={506.500} n="44" yellow />
    <Shield x={501.500} y={283.500} n="237" /><Shield x={543.500} y={306.500} n="243" /><Shield x={897.500} y={284.500} n="258" />
    <Shield x={797.500} y={335.500} n="243" /><Shield x={667.500} y={493.500} n="236" /><Shield x={483.500} y={466.500} n="244" />
    <Shield x={535.500} y={557.500} n="MSH6" />
    <g fill="#413a2c" stroke="#f8f7f3" strokeWidth="2.500" strokeLinejoin="round" paintOrder="stroke">
      {towns.map(([t, x, y, w, s]) => (
        <text key={t + y} x={x - w / 2} y={y} fontSize={s} textLength={w} lengthAdjust="spacingAndGlyphs">{t}</text>
      ))}
      {loose.map(([t, x, y]) => <text key={t} x={x} y={y} fontSize="11">{t}</text>)}
      <text x="802" y="271.500" fontSize="15" fontWeight="500" textLength="53" lengthAdjust="spacingAndGlyphs">Wardha</text>
      <text x="966" y="422" fontSize="13.500">Hin</text>
    </g>
    <rect x="700" y="632" width="285" height="14" fill="#f5f5f5" opacity=".75" />
    <text x="704" y="642" fontSize="10" fill="#444" textLength="112" lengthAdjust="spacingAndGlyphs">Map data ©2017 Google</text>
    <defs><linearGradient id="pin" x2="0" y2="1"><stop offset="0" stopColor="#fb7064" /><stop offset="1" stopColor="#e33a30" /></linearGradient></defs>
    <path d="M725 385.500C724 376 714.500 369 714.500 357A10.500 10.500 0 0 1 735.500 357C735.500 369 726 376 725 385.500Z" fill="url(#pin)" stroke="#b53a32" strokeWidth="1" />
    <circle cx="725" cy="357.500" r="3.800" fill="#5d100d" />
  </svg>
);

export default function App() {
  return (
    <Screen>
      <Global />
      <Panel>
        <PanelTitle>Weather - Google Chrome</PanelTitle>
        <Indicators>
          <svg width="20" height="16" viewBox="0 0 20 16" fill="none" stroke="#dfdbd2" strokeWidth="1.700">
            <path d="M1 5.500Q10-1.500 19 5.500" opacity=".45" /><path d="M3.500 8Q10 3 16.500 8" /><path d="M5.800 10.500Q10 7.300 14.200 10.500" /><path d="M8 12.800Q10 11.500 12 12.800L10 15Z" fill="#dfdbd2" strokeWidth=".5" />
          </svg>
          <Gap $w={12} /><Lang>En</Lang><Gap $w={11} />
          <svg width="10" height="16" viewBox="0 0 10 16" fill="none" stroke="#dfdbd2" strokeWidth="1.300"><path d="M1 4.500L8.500 11.500L5 15V1L8.500 4.500L1 11.500" /></svg>
          <Gap $w={13} />
          <svg width="25" height="14" viewBox="0 0 25 14"><rect x=".8" y="1.800" width="20.500" height="10.400" rx="1" fill="none" stroke="#dfdbd2" strokeWidth="1.500" /><path d="M3 4H9V10H3ZM22 4.500H24V9.500H22Z" fill="#dfdbd2" /></svg>
          <Gap $w={10} />
          <svg width="21" height="16" viewBox="0 0 21 16" fill="none" stroke="#dfdbd2" strokeWidth="1.500"><path d="M1 5.500H4L8 2V14L4 10.500H1Z" fill="#dfdbd2" strokeWidth=".6" /><path d="M10.500 5Q12.500 8 10.500 11M13.500 3.500Q16.500 8 13.500 12.500M16.500 2Q20.800 8 16.500 14" /></svg>
          <Gap $w={15} /><Clock>3:44 PM</Clock><Gap $w={13} />
          <svg width="17" height="17" viewBox="0 0 17 17" stroke="#dfdbd2" fill="none">
            <path d="M6 3.800A5.200 5.200 0 1 0 11 3.800" strokeWidth="2" /><path d="M8.500 1V8" strokeWidth="2" />
            <path d="M8.500 16.800V14M.3 8.500H3M16.700 8.500H14M2.700 14.300L4.800 12.200M14.300 14.300L12.200 12.200M2.700 2.700L4.700 4.700M14.300 2.700L12.300 4.700" strokeWidth="2" />
          </svg>
        </Indicators>
      </Panel>
      <Body>
        <Launcher>
          <Tile><UbuntuIcon /></Tile>
          <Tile><WriterIcon /></Tile>
          <Tile><CalcIcon /></Tile>
          <Tile><ImpressIcon /></Tile>
          <Tile $lit><EditorIcon /></Tile>
          <Tile><FirefoxIcon /></Tile>
          <Tile><SoftwareIcon /></Tile>
          <Tile><AmazonIcon /></Tile>
          <Tile><SettingsIcon /></Tile>
          <Tile><DriveIcon /></Tile>
          <Tile $h={49}><DriveIcon /></Tile>
          <FoldedIcons />
          <RunMark $top={263} /><RunMark $top={673} /><RunMark $top={717} /><RunMark $top={717} $right />
        </Launcher>
        <Browser>
          <TabStrip>
            <Tab title="simple hacking - Google" icon={<GoogleG />} z={4} fade ls={0.05} />
            <Tab title="HTML canvas rotate" icon={<W3 />} z={3} fade ls={0.2} />
            <Tab title="Tryit Editor v3.5" icon={<W3 />} z={2} ls={0.3} />
            <Tab title="how to give revolving" icon={<GoogleG />} z={1} fade ls={0.1} />
            <Tab title="Weather" icon={<PageIcon />} z={5} active ls={0.4} />
            <NewTab width="36" height="20" viewBox="0 0 36 20"><path d="M3 1.500H26Q28 1.500 28.500 3L34.500 16Q35 18 33 18H10.500Q8.500 18 8 16.500L1.500 3.500Q1 1.500 3 1.500Z" fill="#d0d0d0" stroke="#999" /></NewTab>
            <Profile>Akshaya</Profile>
          </TabStrip>
          <Toolbar>
            <svg width="16" height="16" viewBox="0 0 16 16" fill="none" stroke="#cfcfcf" strokeWidth="1.900"><path d="M15 8H2M8 2L2 8L8 14" /></svg>
            <Gap $w={12} />
            <svg width="16" height="16" viewBox="0 0 16 16" fill="none" stroke="#cfcfcf" strokeWidth="1.900"><path d="M1 8H14M8 2L14 8L8 14" /></svg>
            <Gap $w={12} />
            <svg width="17" height="16" viewBox="0 0 17 16"><path d="M13.600 4.500A6 6 0 1 0 14.300 9.500" fill="none" stroke="#5a5a5a" strokeWidth="2" /><path d="M15 1V7.200H8.800Z" fill="#5a5a5a" /></svg>
            <Omnibox>
              <svg width="16" height="16" viewBox="0 0 16 16"><circle cx="8" cy="8" r="6.300" fill="none" stroke="#5a5a5a" strokeWidth="1.400" /><path d="M8 7V11.800M8 4.200V5.900" stroke="#5a5a5a" strokeWidth="1.700" /></svg>
              <Url>file:///home/home/Desktop/weather/index.html</Url>
              <svg width="16" height="16" viewBox="0 0 16 16"><path d="M8 1.900L9.700 6.100L14.200 6.400L10.800 9.300L11.900 13.700L8 11.300L4.100 13.700L5.200 9.300L1.800 6.400L6.300 6.100Z" fill="none" stroke="#5a5a5a" strokeWidth="1.500" /></svg>
            </Omnibox>
            <Menu width="4" height="16" viewBox="0 0 4 16"><g fill="#5a5a5a"><circle cx="2" cy="3" r="1.600" /><circle cx="2" cy="8" r="1.600" /><circle cx="2" cy="13" r="1.600" /></g></Menu>
          </Toolbar>
          <Viewport>
            <Page>
              <LeftColumn>
                <Line>For a general regional search</Line>
                <Selects>
                  <Select>SELECT REGION<Caret /></Select>
                  <Select $off><Caret /></Select>
                  <Select $off><Caret /></Select>
                </Selects>
                <SetButton>SET</SetButton>
                <RoundButton>Find<br />Your<br />weather!!</RoundButton>
              </LeftColumn>
              <MapSlot>
                <MapDisc>
                  <MapDrawing />
                  <Bubble>
                    <Reading>32 ℃<br />Deoli</Reading>
                    <BubbleClose width="10" height="10" viewBox="0 0 10 10"><path d="M.8.8L9.200 9.200M9.200.8L.8 9.200" stroke="#8a8a8a" strokeWidth="1.800" /></BubbleClose>
                    <BubbleTail width="22" height="26" viewBox="0 0 22 26"><path d="M2 1L11 23L20 1" fill="#fff" stroke="#aaa" /><path d="M2 0H20V1.500H2Z" fill="#fff" /></BubbleTail>
                  </Bubble>
                </MapDisc>
              </MapSlot>
              <RightColumn>
                <Line>A more specific search</Line>
                <SearchField><SearchPill>che<TextCaret /></SearchPill></SearchField>
                <Suggestions>
                  {places.map(([b, r, s]) => (
                    <Suggestion key={r}>
                      <svg width="10" height="17" viewBox="0 0 10 17"><path fillRule="evenodd" d="M5 .5A4.700 4.700 0 0 1 9.700 5.200C9.700 8.500 6.400 9.500 5 16.500C3.600 9.500.3 8.500.3 5.200A4.700 4.700 0 0 1 5 .5ZM5 3.300A1.700 1.700 0 1 0 5 6.700A1.700 1.700 0 1 0 5 3.300Z" fill="#b3b3b3" /></svg>
                      <b>{b}</b>{r}<small>{s}</small>
                    </Suggestion>
                  ))}
                  <Powered>
                    powered by
                    <GoogleWord>
                      <Ink $c="#4285f4">G</Ink><Ink $c="#ea4335">o</Ink><Ink $c="#fbbc05">o</Ink><Ink $c="#4285f4">g</Ink><Ink $c="#34a853">l</Ink><Ink $c="#ea4335">e</Ink>
                    </GoogleWord>
                  </Powered>
                </Suggestions>
                <Notes>
                  <TailLine $w={222}>er</TailLine>
                  <TailLine $w={231}>her</TailLine>
                  <Line>The graph below</Line>
                  <Line>Shows Last 10 days temperature</Line>
                  <Line>variation</Line>
                  <Line>Day 1 is today</Line>
                  <Line>Day 2 is yesterday..</Line>
                </Notes>
              </RightColumn>
            </Page>
            <ScrollTrack><Arrow turn={0} /><VThumb /><Spring /><Arrow turn={180} on /></ScrollTrack>
            <ScrollTrack $across><Arrow turn={-90} /><HThumb /><Arrow turn={90} on /></ScrollTrack>
            <Corner />
          </Viewport>
        </Browser>
      </Body>
    </Screen>
  );
}
